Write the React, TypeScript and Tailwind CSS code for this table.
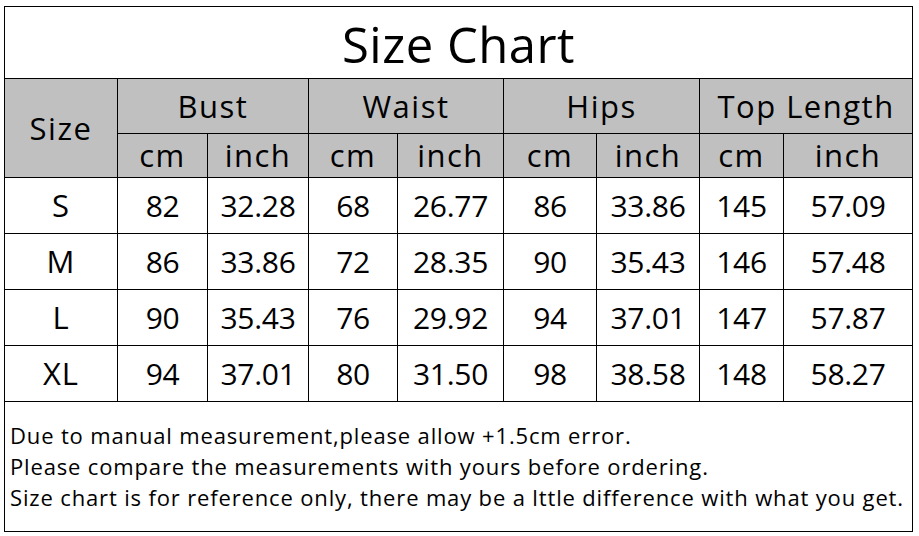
const groups = ['Bust', 'Waist', 'Hips', 'Top Length'];

const rows: string[][] = [
  ['S', '82', '32.28', '68', '26.77', '86', '33.86', '145', '57.09'],
  ['M', '86', '33.86', '72', '28.35', '90', '35.43', '146', '57.48'],
  ['L', '90', '35.43', '76', '29.92', '94', '37.01', '147', '57.87'],
  ['XL', '94', '37.01', '80', '31.50', '98', '38.58', '148', '58.27'],
];

const colWidths = [113, 90, 101, 89, 106, 93, 103, 84, 129];

const notes = [
  'Due to manual measurement,please allow +1.5cm error.',
  'Please compare the measurements with yours before ordering.',
  'Size chart is for reference only, there may be a lttle difference with what you get.',
];

const head = 'border border-black text-center text-[31px] leading-none tracking-[1.5px]';

export default function App() {
  return (
    <div className="h-[536px] w-[919px] bg-white pl-[4px] pt-[6px] font-['Open_Sans',sans-serif] text-black">
      <table className="w-[909px] table-fixed border-collapse">
        <colgroup>
          {colWidths.map((w, i) => (
            <col key={i} style={{ width: w }} />
          ))}
        </colgroup>
        <tbody>
          <tr className="h-[72px]">
            <td colSpan={9} className="border border-black pt-[4px] text-center text-[49px] leading-none tracking-[0.5px]">
              Size Chart
            </td>
          </tr>
          <tr className="h-[55px] bg-[#c0c0c0]">
            <td rowSpan={2} className={head}>
              Size
            </td>
            {groups.map((g) => (
              <td key={g} colSpan={2} className={head}>
                {g}
              </td>
            ))}
          </tr>
          <tr className="h-[44px] bg-[#c0c0c0]">
            {groups.map((g) => (
              <>
                <td key={g + 'cm'} className={head}>
                  cm
                </td>
                <td key={g + 'in'} className={head}>
                  inch
                </td>
              </>
            ))}
          </tr>
          {rows.map((r) => (
            <tr key={r[0]} className="h-[56px]">
              {r.map((v, i) => (
                <td
                  key={i}
                  className={
                    i === 0
                      ? 'border border-black text-center text-[31px] leading-none tracking-[1px]'
                      : 'border border-black text-center text-[30px] leading-none tracking-[-0.3px]'
                  }
                >
                  {v}
                </td>
              ))}
            </tr>
          ))}
          <tr className="h-[130px]">
            <td colSpan={9} className="border border-black px-[5px] text-left align-middle text-[22px] leading-[31px] tracking-[0.85px]">
              {notes.map((n) => (
                <div key={n} className="whitespace-nowrap">
                  {n}
                </div>
              ))}
            </td>
          </tr>
        </tbody>
      </table>
    </div>
  );
}
